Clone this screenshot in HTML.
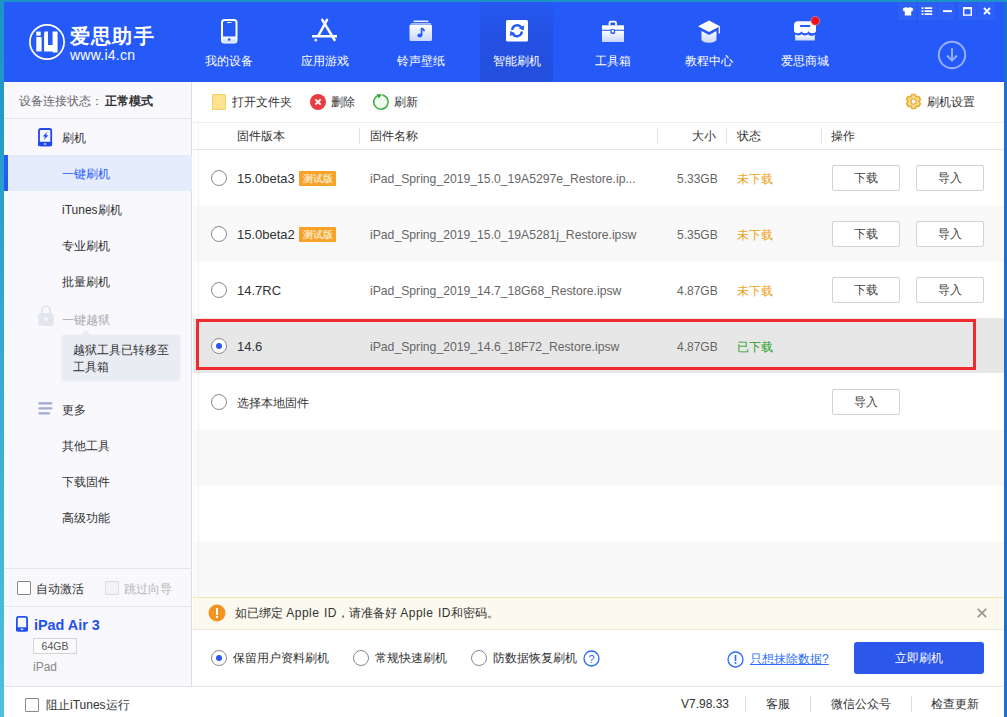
<!DOCTYPE html>
<html><head><meta charset="utf-8">
<style>
*{margin:0;padding:0;box-sizing:border-box}
html,body{width:1007px;height:717px;overflow:hidden;background:#fff}
body{font-family:"Liberation Sans",sans-serif;font-size:12px;color:#333;position:relative}
.a{position:absolute}
.t{position:absolute;white-space:nowrap;line-height:16px}
#hdr{left:0;top:0;width:1007px;height:82px;background:#2559f8}
.nav{position:absolute;top:6px;width:74px;height:76px;color:#fff;text-align:center}
.nav .lb{position:absolute;left:0;width:74px;top:47px;line-height:16px;font-size:12px}
.nav svg{position:absolute;left:25px;top:12px}
.wb{position:absolute;top:2px;width:18px;height:18px;background:rgba(255,255,255,.045)}
#side{left:4px;top:82px;width:188px;height:604px;background:#f8f8fd;border-right:1px solid #dcdde3}
.sl{position:absolute;left:58px;line-height:16px;color:#333}
.hline{position:absolute;height:1px;background:#e3e5ea}
.row{position:absolute;left:193px;width:811px;height:56px}
.radio{position:absolute;width:16px;height:16px;border:1px solid #8a8a8a;border-radius:50%;background:#fff}
.btn{position:absolute;width:68px;height:26px;border:1px solid #d2d2d2;border-radius:2px;background:#fff;text-align:center;line-height:24px;color:#444}
.tag{display:inline-block;position:absolute;height:15px;width:37px;background:#f6a328;color:#fff;font-size:10px;line-height:15px;text-align:center;border-radius:1px}
.gr{color:#666;font-size:12px}
</style></head><body>
<!-- window border -->
<div class="a" style="left:0;top:0;width:4px;height:717px;background:linear-gradient(#1b93c4,#4fc0dc)"></div>
<div class="a" style="left:1004px;top:0;width:3px;height:717px;background:#1b70c8"></div>
<div class="a" style="left:0;top:0;width:1007px;height:2px;background:#1b93c4"></div>

<div id="hdr" class="a" style="left:4px;top:2px;width:1000px;height:80px"></div>

<!-- logo -->
<svg class="a" style="left:28px;top:23px" width="38" height="38" viewBox="0 0 38 38">
 <circle cx="19" cy="19" r="17.1" fill="none" stroke="#fff" stroke-width="1.7"/>
 <rect x="8.3" y="8.6" width="4.4" height="4.1" fill="#fff"/>
 <rect x="8.3" y="14" width="5.3" height="14.4" fill="#fff"/>
 <path d="M16.8 8.6h3.2v13.5h4.6V8.6h5v21h-5v-1.2h-8.5V10z" fill="#fff"/>
</svg>
<div class="t" style="left:70px;top:25px;font-size:20px;line-height:22px;font-weight:bold;color:#fff;letter-spacing:1.2px">爱思助手</div>
<div class="t" style="left:70px;top:48px;font-size:14px;line-height:15px;color:#fff;letter-spacing:0.25px">www.i4.cn</div>

<!-- nav -->
<div class="a" style="left:480px;top:2px;width:73px;height:80px;background:linear-gradient(#2557f2,#2451e2 45%,#234fde)"></div>
<div class="t" style="left:192px;top:53px;width:74px;text-align:center;color:#fff">我的设备</div>
<div class="t" style="left:288px;top:53px;width:74px;text-align:center;color:#fff">应用游戏</div>
<div class="t" style="left:384px;top:53px;width:74px;text-align:center;color:#fff">铃声壁纸</div>
<div class="t" style="left:480px;top:53px;width:74px;text-align:center;color:#fff">智能刷机</div>
<div class="t" style="left:576px;top:53px;width:74px;text-align:center;color:#fff">工具箱</div>
<div class="t" style="left:672px;top:53px;width:74px;text-align:center;color:#fff">教程中心</div>
<div class="t" style="left:768px;top:53px;width:74px;text-align:center;color:#fff">爱思商城</div>
<svg class="a" style="left:0;top:0" width="1007" height="82" viewBox="0 0 1007 82">
 <defs>
  <linearGradient id="wg" x1="0" y1="0" x2="0" y2="1"><stop offset="0" stop-color="#fff"/><stop offset="1" stop-color="#c9d6fd"/></linearGradient>
 </defs>
 <!-- phone -->
 <rect x="222" y="20" width="14.5" height="22.5" rx="2.5" fill="none" stroke="#fff" stroke-width="2"/>
 <path d="M222 36.5h14.5v3.5a2.5 2.5 0 0 1-2.5 2.5h-9.5a2.5 2.5 0 0 1-2.5-2.5z" fill="url(#wg)"/>
 <circle cx="229.2" cy="39.5" r="1.3" fill="#2559f8"/>
 <rect x="227" y="22" width="4.5" height="1" fill="#fff"/>
 <!-- app store -->
 <path d="M327 19.8L318.5 35.5M322.3 19.8L334.6 40" stroke="#fff" stroke-width="2.5" stroke-linecap="round"/>
 <rect x="312" y="35" width="25" height="2.5" fill="#fff"/>
 <circle cx="315.8" cy="40.2" r="1.4" fill="#e4eaff"/>
 <!-- music -->
 <rect x="413.5" y="20.5" width="15" height="1.6" fill="#fff" opacity=".9"/>
 <path d="M411 23.5h20v0" stroke="#fff" stroke-width="1" opacity=".6"/>
 <rect x="409.5" y="24.5" width="22.5" height="16.5" rx="1.5" fill="url(#wg)"/>
 <path d="M421.6 28v7.6" stroke="#2559f8" stroke-width="1.7"/>
 <ellipse cx="419.8" cy="35.6" rx="2.4" ry="2" fill="#2559f8"/>
 <path d="M421.6 28.3q2.5 .8 2.6 3" stroke="#2559f8" stroke-width="1.6" fill="none"/>
 <!-- refresh -->
 <rect x="506" y="20" width="22" height="21.5" rx="1.5" fill="#fff"/>
 <path d="M512.2 30a5 5 0 0 1 9.2-2.4" stroke="#2559f8" stroke-width="2.4" fill="none"/>
 <path d="M524.2 25.2l-.6 5.3-4.8-2.3z" fill="#2559f8"/>
 <path d="M521.8 31.5a5 5 0 0 1-9.2 2.4" stroke="#2559f8" stroke-width="2.4" fill="none"/>
 <path d="M509.8 36.3l.6-5.3 4.8 2.3z" fill="#2559f8"/>
 <!-- toolbox -->
 <path d="M609.5 25.5v-2.5a1.3 1.3 0 0 1 1.3-1.3h3.9a1.3 1.3 0 0 1 1.3 1.3v2.5" stroke="#fff" stroke-width="1.8" fill="none"/>
 <rect x="602" y="25.3" width="22" height="4.4" fill="#fff"/>
 <rect x="602" y="30.8" width="22" height="11.2" fill="url(#wg)"/>
 <rect x="610.5" y="29" width="4.6" height="5" rx="1.5" fill="#2559f8"/>
 <rect x="611.8" y="29.8" width="2" height="2.6" fill="#fff"/>
 <!-- graduation -->
 <path d="M709 20.5l11 5.8-11 5.8-11-5.8z" fill="#fff"/>
 <path d="M701.5 31v8.5c0 1.8 3.4 3.2 7.5 3.2s7.5-1.4 7.5-3.2V31l-7.5 4z" fill="url(#wg)"/>
 <path d="M719.3 26.5v7" stroke="#fff" stroke-width="1.3"/>
 <!-- shop -->
 <path d="M798 21.2H812.6A3.4 3.4 0 0 1 816 24.6V30.6A3.6 2.6 0 0 1 808.7 30.6A3.6 2.6 0 0 1 801.4 30.6A3.7 2.6 0 0 1 794 30.6V25.2A4 4 0 0 1 798 21.2Z" fill="#fff"/>
 <rect x="799.8" y="25" width="10.6" height="2.1" rx="1" fill="#2559f8"/>
 <path d="M795.2 34A3.3 1.8 0 0 0 801.7 34A3.3 1.8 0 0 0 808.2 34A3.3 1.8 0 0 0 814.8 34V40.6H795.2Z" fill="url(#wg)"/>
 <circle cx="815.3" cy="20.8" r="4.4" fill="#f0141e" stroke="#ffb3b3" stroke-opacity=".6" stroke-width=".8"/>
</svg>
<!-- window buttons -->
<div class="wb" style="left:898px"></div>
<div class="wb" style="left:918px"></div>
<div class="wb" style="left:937px"></div>
<div class="wb" style="left:958px"></div>
<div class="wb" style="left:977px"></div>
<svg class="a" style="left:898px;top:2px" width="100" height="18" viewBox="0 0 100 18">
 <path d="M4.7 6.8l2.6-1.6h1.2q1.5 1.2 3 0h1.2l2.6 1.6-.9 2.4h-1.2v4.3H6.8V9.2H5.6z" fill="#fff"/>
 <path d="M23.6 5.2h1.8v1.8h-1.8zM23.6 8.2h1.8v1.8h-1.8zM23.6 11.2h1.8v1.8h-1.8zM26.6 5.2h7.6v1.8h-7.6zM26.6 8.2h7.6v1.8h-7.6zM26.6 11.2h7.6v1.8h-7.6z" fill="#fff"/>
 <rect x="45" y="8.2" width="9" height="1.9" fill="#fff"/>
 <rect x="65.7" y="5.7" width="7.6" height="7.4" fill="none" stroke="#fff" stroke-width="1.4"/><rect x="65" y="5" width="9" height="2.2" fill="#fff"/>
 <path d="M86 6l6 6.2M92 6l-6 6.2" stroke="#fff" stroke-width="1.9"/>
</svg>
<svg class="a" style="left:937px;top:40px" width="30" height="30" viewBox="0 0 30 30">
 <circle cx="15" cy="15" r="13.2" fill="none" stroke="#94aefb" stroke-width="2"/>
 <path d="M15 8v12.5M10 15.5l5 5 5-5" fill="none" stroke="#94aefb" stroke-width="2"/>
</svg>

<!-- sidebar -->
<div id="side" class="a"></div>
<div class="t" style="left:19px;top:93px;color:#666">设备连接状态：<b style="margin-left:2px;color:#333">正常模式</b></div>
<div class="hline" style="left:4px;top:118px;width:188px"></div>
<svg class="a" style="left:37px;top:127px" width="16" height="20" viewBox="0 0 16 20"><rect x="2" y="2" width="12.2" height="16.4" rx="1.6" fill="none" stroke="#2047f0" stroke-width="1.8"/><rect x="1.1" y="14.8" width="14" height="4.5" rx="1.4" fill="#2047f0"/><rect x="7" y="16.4" width="2.2" height="1.2" fill="#fff"/><path d="M10.6 4.6L5.6 9.4H8.2L6.8 13.2L11.4 8.2H8.9z" fill="#2047f0"/></svg>
<div class="t" style="left:62px;top:130px">刷机</div>
<div class="a" style="left:4px;top:155px;width:188px;height:36px;background:#e5ecfc"></div>
<div class="a" style="left:4px;top:155px;width:4px;height:36px;background:#2559f8"></div>
<div class="t" style="left:62px;top:166px;color:#2559f8">一键刷机</div>
<div class="t" style="left:62px;top:202px">iTunes刷机</div>
<div class="t" style="left:62px;top:238px">专业刷机</div>
<div class="t" style="left:62px;top:274px">批量刷机</div>
<svg class="a" style="left:37px;top:304px" width="18" height="23" viewBox="0 0 18 23"><path d="M5 9V6a4 4 0 0 1 8 0v3" fill="none" stroke="#e6e8ef" stroke-width="2.2"/><rect x="1.5" y="9" width="15" height="13" rx="2" fill="#e3e5ed"/><circle cx="9" cy="15" r="2" fill="#f3f4f8"/></svg>
<div class="t" style="left:62px;top:312px;color:#aaa">一键越狱</div>
<div class="a" style="left:62px;top:335px;width:118px;height:45px;background:#e9ecf3;border-radius:2px;box-shadow:0 1px 3px rgba(120,130,160,.12)"></div>
<div class="a" style="left:81px;top:330px;width:0;height:0;border-left:5px solid transparent;border-right:5px solid transparent;border-bottom:5px solid #e9ecf3"></div>
<div class="t" style="left:73px;top:342px;line-height:17px;color:#333">越狱工具已转移至<br>工具箱</div>
<svg class="a" style="left:37px;top:401px" width="16" height="15" viewBox="0 0 16 15"><path d="M2.4 2.3h12M2.4 7.3h12M2.4 12.3h9.6" stroke="#a4a7cf" stroke-width="2.2" stroke-linecap="round"/></svg>
<div class="t" style="left:62px;top:402px">更多</div>
<div class="t" style="left:62px;top:438px">其他工具</div>
<div class="t" style="left:62px;top:474px">下载固件</div>
<div class="t" style="left:62px;top:510px">高级功能</div>
<div class="hline" style="left:4px;top:568px;width:188px"></div>
<div class="a" style="left:17px;top:581px;width:14px;height:14px;border:1px solid #888;background:#fff;border-radius:1px"></div>
<div class="t" style="left:36px;top:581px">自动激活</div>
<div class="a" style="left:105px;top:581px;width:14px;height:14px;border:1px solid #ddd;background:#f3f3f5;border-radius:1px"></div>
<div class="t" style="left:124px;top:581px;color:#b5b5b5">跳过向导</div>
<div class="hline" style="left:4px;top:606px;width:188px"></div>
<svg class="a" style="left:16px;top:616px" width="13" height="17" viewBox="0 0 13 17"><rect x="0.9" y="0.9" width="10.2" height="13.8" rx="1.6" fill="none" stroke="#2350f2" stroke-width="1.8"/><rect x="0" y="11.2" width="12" height="4.3" rx="1.3" fill="#2350f2"/><rect x="4.8" y="12.6" width="2.4" height="1.3" fill="#fff"/></svg>
<div class="t" style="left:34px;top:617px;font-size:14.4px;line-height:17px;font-weight:bold;color:#2350f2">iPad Air 3</div>
<div class="a" style="left:33px;top:638px;width:44px;height:16px;border:1px solid #d4d4d4;background:#fbfbfc;font-size:10.5px;line-height:14px;text-align:center;color:#555">64GB</div>
<div class="t" style="left:33px;top:659px;color:#888">iPad</div>
<div class="hline" style="left:4px;top:686px;width:999px;background:#e3e5ea"></div>
<div class="a" style="left:25px;top:698px;width:14px;height:14px;border:1px solid #888;background:#fff;border-radius:1px"></div>
<div class="t" style="left:46px;top:697px">阻止iTunes运行</div>

<!-- main toolbar -->
<div class="a" style="left:212px;top:94px;width:14px;height:16px;background:#fde28f;border:1px solid #f3cf60;border-radius:1px"></div>
<div class="t" style="left:232px;top:94px">打开文件夹</div>
<svg class="a" style="left:310px;top:94px" width="16" height="16" viewBox="0 0 16 16"><circle cx="8" cy="8" r="8" fill="#ea3b43"/><path d="M5.3 5.3l5.4 5.4M10.7 5.3l-5.4 5.4" stroke="#fff" stroke-width="1.8"/></svg>
<div class="t" style="left:331px;top:94px">删除</div>
<svg class="a" style="left:372px;top:93px" width="18" height="18" viewBox="0 0 18 18"><circle cx="9" cy="9" r="7" fill="#f1faf1"/><path d="M10.3 1.9A7.2 7.2 0 1 1 5.6 2.6" fill="none" stroke="#3fae3f" stroke-width="1.5"/><path d="M4.8 0.9L10 1.6L6.6 5.4z" fill="#2ea52e"/></svg>
<div class="t" style="left:394px;top:94px">刷新</div>
<svg class="a" style="left:905px;top:93px" width="17" height="17" viewBox="0 0 17 17"><path d="M5.91 3.76 L6.79 1.51 L10.21 1.51 L11.09 3.76 L11.31 3.89 L13.70 3.52 L15.41 6.49 L13.90 8.37 L13.90 8.63 L15.41 10.51 L13.70 13.48 L11.31 13.11 L11.09 13.24 L10.21 15.49 L6.79 15.49 L5.91 13.24 L5.69 13.11 L3.30 13.48 L1.59 10.51 L3.10 8.63 L3.10 8.37 L1.59 6.49 L3.30 3.52 L5.69 3.89Z" fill="#f7dc94" stroke="#e9b13a" stroke-width="1.7" stroke-linejoin="round"/><circle cx="8.5" cy="8.5" r="2.6" fill="#fff" stroke="#e9b13a" stroke-width="1.4"/></svg>
<div class="t" style="left:927px;top:94px">刷机设置</div>
<div class="hline" style="left:193px;top:122px;width:811px;background:#eeeff2"></div>

<!-- table header -->
<div class="t" style="left:237px;top:128px">固件版本</div>
<div class="a" style="left:359px;top:128px;width:1px;height:16px;background:#e3e3e3"></div>
<div class="t" style="left:370px;top:128px">固件名称</div>
<div class="a" style="left:657px;top:128px;width:1px;height:16px;background:#e3e3e3"></div>
<div class="t" style="left:692px;top:128px">大小</div>
<div class="a" style="left:726px;top:128px;width:1px;height:16px;background:#e3e3e3"></div>
<div class="t" style="left:737px;top:128px">状态</div>
<div class="a" style="left:821px;top:128px;width:1px;height:16px;background:#e3e3e3"></div>
<div class="t" style="left:831px;top:128px">操作</div>
<div class="hline" style="left:193px;top:149px;width:811px;background:#e6e6e6"></div>

<!-- rows -->
<div class="row" style="top:206px;background:#f9f9f9"></div>
<div class="row" style="top:318px;height:55px;background:#e7e7e7"></div>
<div class="row" style="top:430px;background:#f9f9f9"></div>
<div class="row" style="top:542px;height:55px;background:#f9f9f9"></div>

<div class="radio" style="left:211px;top:170px"></div>
<div class="t" style="left:237px;top:171px;font-size:13px">15.0beta3</div>
<div class="tag" style="left:299px;top:171px">测试版</div>
<div class="t gr" style="font-size:12.2px;left:370px;top:171px">iPad_Spring_2019_15.0_19A5297e_Restore.ip...</div>
<div class="t gr" style="left:677px;top:171px;">5.33GB</div>
<div class="t" style="left:737px;top:171px;color:#f0a020">未下载</div>
<div class="btn" style="left:832px;top:165px">下载</div>
<div class="btn" style="left:916px;top:165px">导入</div>

<div class="radio" style="left:211px;top:226px"></div>
<div class="t" style="left:237px;top:227px;font-size:13px">15.0beta2</div>
<div class="tag" style="left:299px;top:227px">测试版</div>
<div class="t gr" style="font-size:12.2px;left:370px;top:227px">iPad_Spring_2019_15.0_19A5281j_Restore.ipsw</div>
<div class="t gr" style="left:677px;top:227px;">5.35GB</div>
<div class="t" style="left:737px;top:227px;color:#f0a020">未下载</div>
<div class="btn" style="left:832px;top:221px">下载</div>
<div class="btn" style="left:916px;top:221px">导入</div>

<div class="radio" style="left:211px;top:282px"></div>
<div class="t" style="left:237px;top:283px;font-size:13px">14.7RC</div>
<div class="t gr" style="font-size:12.2px;left:370px;top:283px">iPad_Spring_2019_14.7_18G68_Restore.ipsw</div>
<div class="t gr" style="left:677px;top:283px;">4.87GB</div>
<div class="t" style="left:737px;top:283px;color:#f0a020">未下载</div>
<div class="btn" style="left:832px;top:277px">下载</div>
<div class="btn" style="left:916px;top:277px">导入</div>

<div class="a" style="left:196px;top:319px;width:780px;height:51px;border:3px solid #ee2b2e"></div>
<div class="radio" style="left:211px;top:338px"><div class="a" style="left:4px;top:4px;width:6px;height:6px;border-radius:50%;background:#2559f8"></div></div>
<div class="t" style="left:237px;top:339px;font-size:13px">14.6</div>
<div class="t gr" style="font-size:12.2px;left:370px;top:339px">iPad_Spring_2019_14.6_18F72_Restore.ipsw</div>
<div class="t gr" style="left:677px;top:339px;">4.87GB</div>
<div class="t" style="left:737px;top:339px;color:#27a02a">已下载</div>

<div class="radio" style="left:211px;top:394px"></div>
<div class="t" style="left:237px;top:395px">选择本地固件</div>
<div class="btn" style="left:832px;top:389px">导入</div>

<div class="a" style="left:198px;top:122px;width:1px;height:475px;background:rgba(0,0,0,.045)"></div>
<!-- notice -->
<div class="a" style="left:193px;top:597px;width:811px;height:33px;background:#fcf9ee;border-top:1px solid #f5e3ad;border-bottom:1px solid #e9e6de"></div>
<svg class="a" style="left:208px;top:604px" width="18" height="18" viewBox="0 0 18 18"><circle cx="9" cy="9" r="8.5" fill="#f39322"/><rect x="8" y="4" width="2" height="7" fill="#fff"/><rect x="8" y="12" width="2" height="2" fill="#fff"/></svg>
<div class="t" style="left:235px;top:605px">如已绑定 <span style="letter-spacing:.45px;word-spacing:1px">Apple ID</span>，请准备好 <span style="letter-spacing:.45px;word-spacing:1px">Apple ID</span>和密码。</div>
<svg class="a" style="left:976px;top:607px" width="12" height="12" viewBox="0 0 12 12"><path d="M1.8 1.8l8.4 8.4M10.2 1.8l-8.4 8.4" stroke="#999" stroke-width="1.8"/></svg>

<div class="radio" style="left:211px;top:650px"><div class="a" style="left:4px;top:4px;width:6px;height:6px;border-radius:50%;background:#2559f8"></div></div>
<div class="t" style="left:233px;top:650px">保留用户资料刷机</div>
<div class="radio" style="left:353px;top:650px"></div>
<div class="t" style="left:375px;top:650px">常规快速刷机</div>
<div class="radio" style="left:471px;top:650px"></div>
<div class="t" style="left:493px;top:650px">防数据恢复刷机</div>
<svg class="a" style="left:583px;top:650px" width="17" height="17" viewBox="0 0 17 17"><circle cx="8.5" cy="8.5" r="7.5" fill="none" stroke="#2a6cf5" stroke-width="1.3"/><text x="8.5" y="13" font-size="11" text-anchor="middle" fill="#2a6cf5" font-family="Liberation Sans">?</text></svg>
<svg class="a" style="left:727px;top:651px" width="17" height="17" viewBox="0 0 17 17"><circle cx="8.5" cy="8.5" r="7.5" fill="none" stroke="#2a6cf5" stroke-width="1.3"/><rect x="7.7" y="4" width="1.6" height="6" fill="#2a6cf5"/><rect x="7.7" y="11" width="1.6" height="1.8" fill="#2a6cf5"/></svg>
<div class="t" style="left:750px;top:651px;color:#2a6cf5;text-decoration:underline">只想抹除数据?</div>
<div class="a" style="left:854px;top:642px;width:130px;height:32px;background:#2b57ea;border-radius:3px;color:#fff;text-align:center;line-height:32px;font-size:12px">立即刷机</div>

<!-- footer -->
<div class="t" style="left:681px;top:696px">V7.98.33</div>
<div class="a" style="left:745px;top:696px;width:1px;height:16px;background:#ddd"></div>
<div class="t" style="left:766px;top:696px">客服</div>
<div class="a" style="left:810px;top:696px;width:1px;height:16px;background:#ddd"></div>
<div class="t" style="left:831px;top:696px">微信公众号</div>
<div class="a" style="left:911px;top:696px;width:1px;height:16px;background:#ddd"></div>
<div class="t" style="left:931px;top:696px">检查更新</div>
</body></html>
